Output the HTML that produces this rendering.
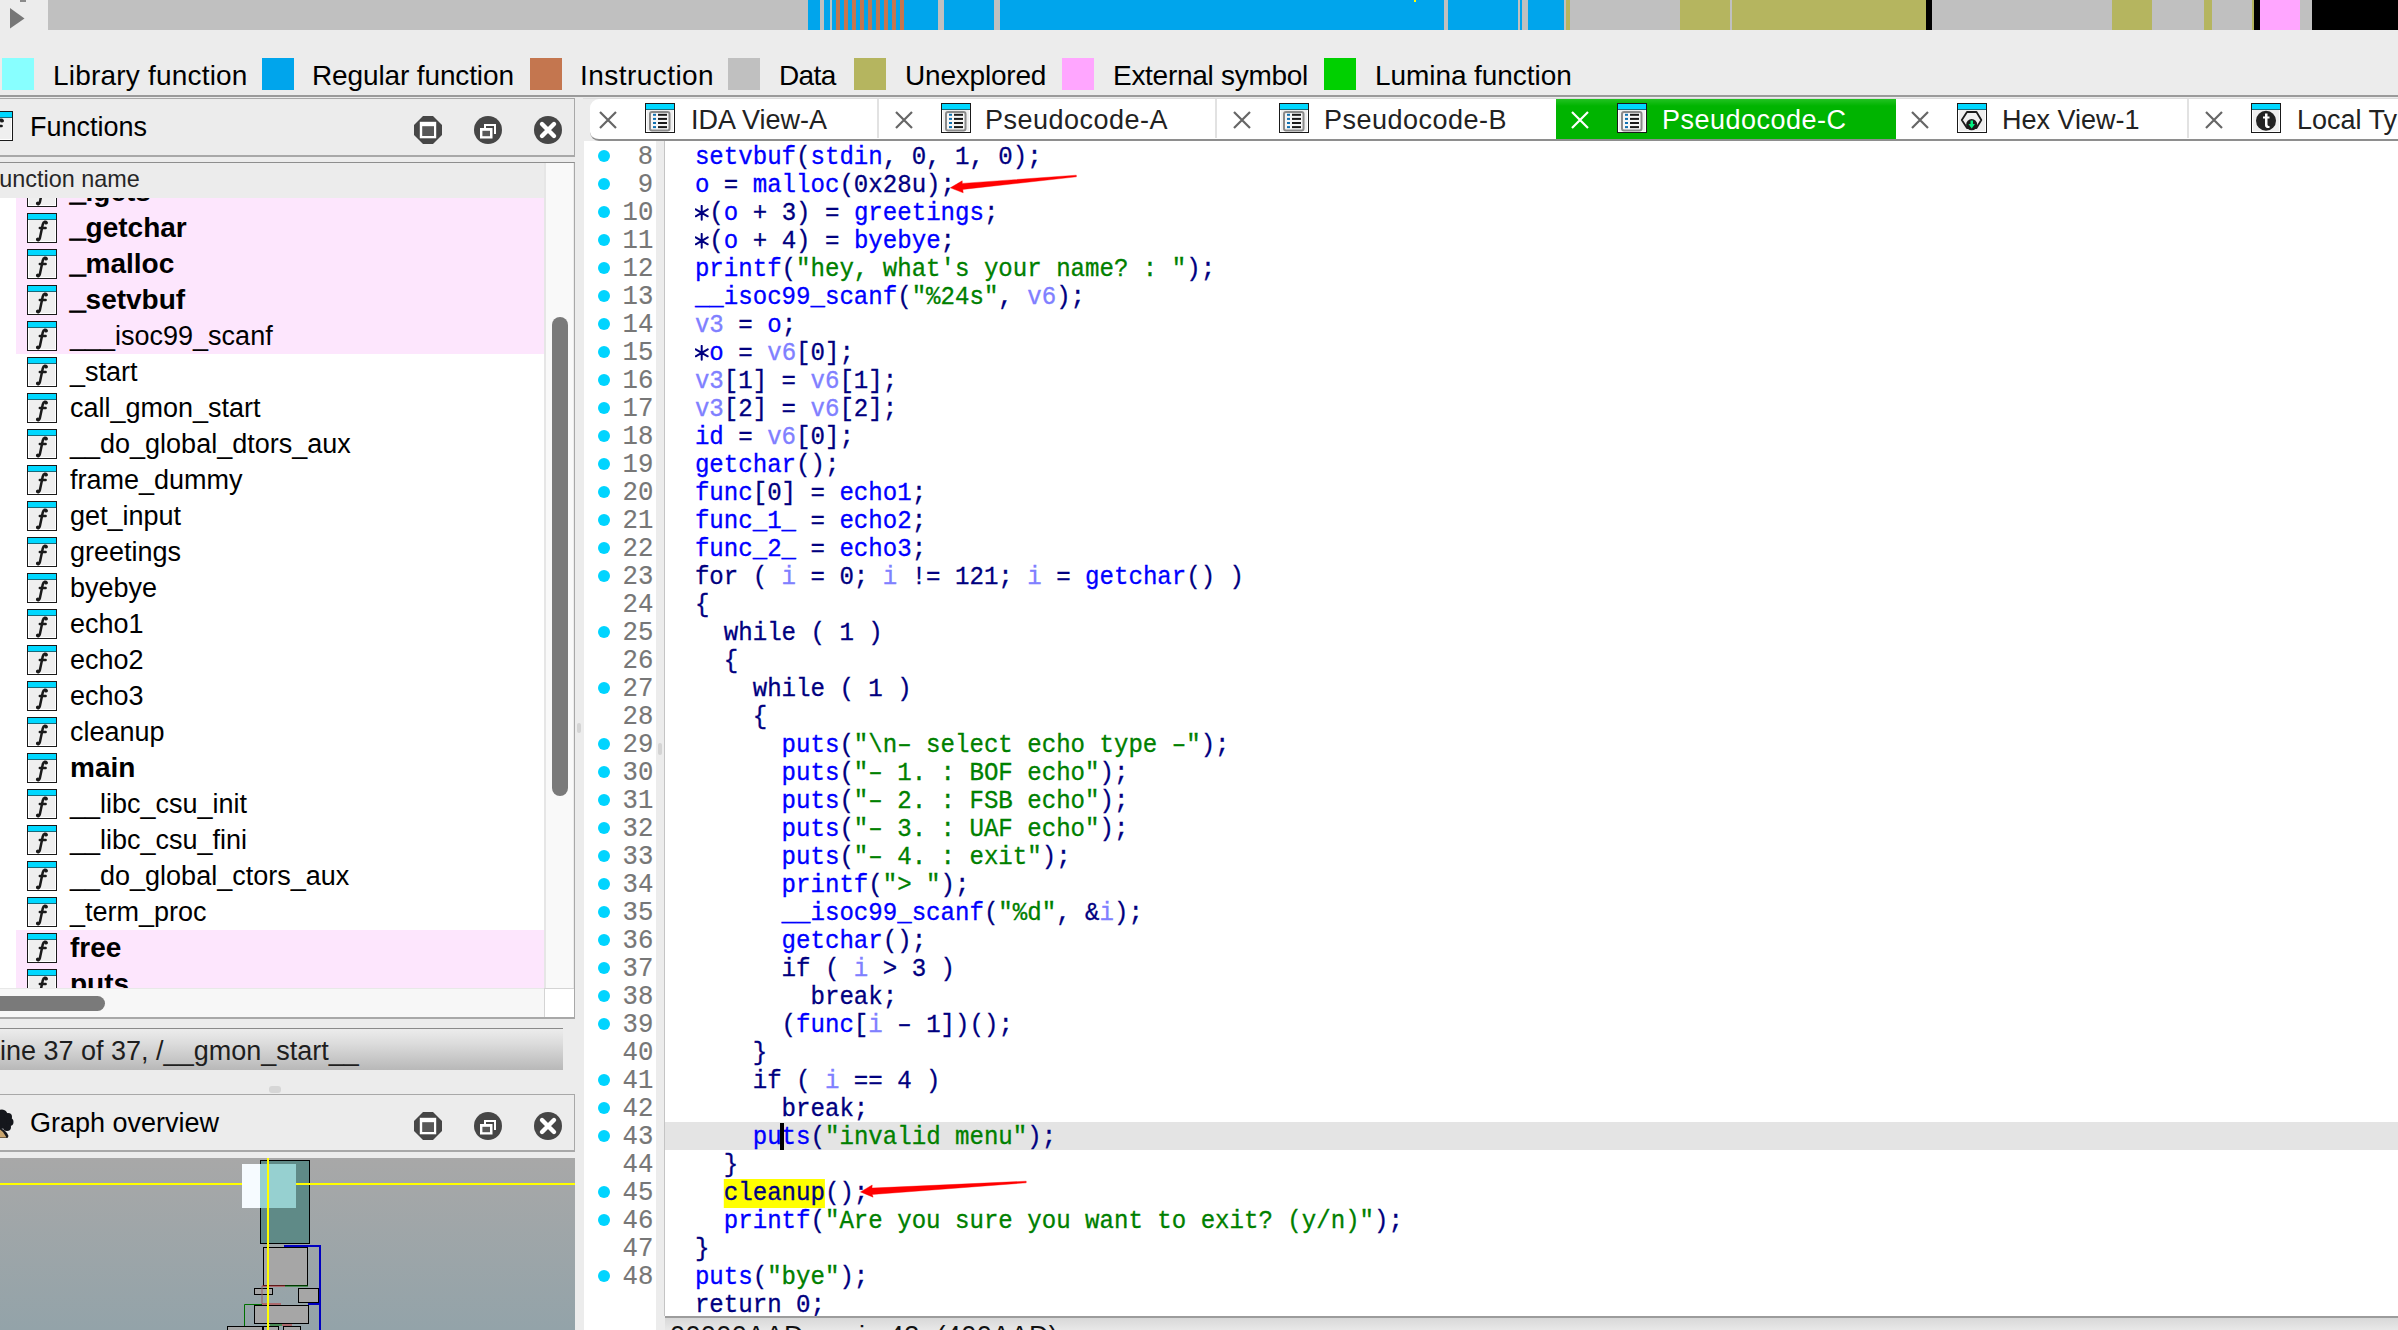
<!DOCTYPE html>
<html><head><meta charset="utf-8">
<style>
*{box-sizing:border-box;margin:0;padding:0}
html,body{width:2398px;height:1330px;overflow:hidden;background:#ececec;font-family:"Liberation Sans",sans-serif;color:#000}
.a{position:absolute}
#nav div{position:absolute;top:0;height:30px}
.g{background:#c0c0c0}.b{background:#00a5ec}.o{background:#c4764f}.y{background:#b5b55f}.k{background:#000}.pk{background:#ffa6ff}
.sw{position:absolute;top:58px;width:32px;height:32px}
.lg{position:absolute;top:59px;font-size:28px;line-height:34px;white-space:nowrap}

.r{position:absolute;left:0;width:544px;height:36px;white-space:nowrap}
.r.p{background:#fde6fd;left:16px;width:528px}
.r .fi{position:absolute;left:27px;top:3px;width:30px;height:30px}
.r.p .fi{left:11px}
.r span{position:absolute;left:70px;top:1px;font-size:27px;line-height:34px}
.r.p span{left:54px}
.r.bd span{font-weight:bold;font-size:28px}
.us{font-style:normal;-webkit-text-stroke:1.3px currentColor}

.sep{top:99px;width:2px;height:39px;background:#e2e2e2}
.xb{top:111px;width:18px;height:18px;stroke:#666}
.ti{top:103px;width:30px;height:30px}
.tt{top:103px;font-size:27px;line-height:34px;color:#222;white-space:nowrap}
.gl{position:absolute;left:583px;width:73px;height:28px}
.gl span{position:absolute;right:3px;top:1px;font-family:"Liberation Mono",monospace;font-size:27px;line-height:28px;color:#777;-webkit-text-stroke:0.15px currentColor;transform:scaleX(0.95);transform-origin:100% 0}
.dot{position:absolute;left:15px;top:8px;width:12px;height:12px;border-radius:50%;background:#00d4ff}
.cl{position:absolute;left:0;height:28px;width:1732px}
.cl pre{font-family:"Liberation Mono",monospace;font-size:25px;line-height:28px;position:absolute;left:0;top:1.5px;-webkit-text-stroke:0.32px currentColor;transform:scaleX(0.9631);transform-origin:0 0}
.n{color:#000080}.f{color:#0000ff}.s{color:#008000}.v{color:#8080ff}
.hl{color:#000080;background:#ffff00}
.ast{color:transparent;-webkit-text-stroke-color:transparent}
.cur{display:inline-block;width:0;height:28px;position:relative}
.cur:after{content:"";position:absolute;left:-1px;top:-22px;width:4px;height:27px;background:#000}
</style></head><body>
<!-- nav band -->
<div id="nav">
<svg class="a" style="left:0;top:0" width="48" height="30"><polygon points="10,8 24.5,18.5 10,28.5" fill="#777"/><rect x="20" y="0" width="6" height="2" fill="#8a8a8a"/></svg>
<div class="g" style="left:48px;width:760px"></div>
<div class="b" style="left:808px;width:12px"></div>
<div class="g" style="left:820px;width:4px"></div>
<div class="b" style="left:824px;width:6px"></div>
<div class="g" style="left:830px;width:2px"></div>
<div class="b" style="left:832px;width:72px"></div>
<div class="o" style="left:836px;width:4px"></div>
<div class="o" style="left:844px;width:4px"></div>
<div class="o" style="left:852px;width:4px"></div>
<div class="o" style="left:860px;width:4px"></div>
<div class="o" style="left:868px;width:4px"></div>
<div class="o" style="left:876px;width:4px"></div>
<div class="o" style="left:884px;width:4px"></div>
<div class="o" style="left:892px;width:4px"></div>
<div class="o" style="left:900px;width:4px"></div>
<div class="b" style="left:904px;width:34px"></div>
<div class="g" style="left:938px;width:6px"></div>
<div class="b" style="left:944px;width:50px"></div>
<div class="g" style="left:994px;width:6px"></div>
<div class="b" style="left:1000px;width:444px"></div>
<div style="left:1414px;width:2px;height:2px;background:#ff0"></div>
<div class="g" style="left:1444px;width:4px"></div>
<div class="b" style="left:1448px;width:70px"></div>
<div class="g" style="left:1518px;width:2px"></div>
<div class="b" style="left:1520px;width:2px"></div>
<div class="g" style="left:1522px;width:6px"></div>
<div class="b" style="left:1528px;width:36px"></div>
<div class="g" style="left:1564px;width:2px"></div>
<div class="y" style="left:1566px;width:4px"></div>
<div class="g" style="left:1570px;width:110px"></div>
<div class="y" style="left:1680px;width:50px"></div>
<div class="g" style="left:1730px;width:2px"></div>
<div class="y" style="left:1732px;width:194px"></div>
<div class="k" style="left:1926px;width:6px"></div>
<div class="g" style="left:1932px;width:180px"></div>
<div class="y" style="left:2112px;width:40px"></div>
<div class="g" style="left:2152px;width:52px"></div>
<div class="y" style="left:2204px;width:8px"></div>
<div class="g" style="left:2212px;width:40px"></div>
<div class="y" style="left:2252px;width:2px"></div>
<div class="k" style="left:2254px;width:6px"></div>
<div class="pk" style="left:2260px;width:40px"></div>
<div class="g" style="left:2300px;width:12px"></div>
<div class="k" style="left:2312px;width:86px"></div>
</div>
<!-- legend -->
<div class="sw" style="left:2px;background:#88ffff"></div><div class="lg" style="left:53px;letter-spacing:0.2px">Library function</div>
<div class="sw" style="left:262px;background:#00a5ec"></div><div class="lg" style="left:312px;letter-spacing:-0.13px">Regular function</div>
<div class="sw" style="left:530px;background:#c4764f"></div><div class="lg" style="left:580px;letter-spacing:0.45px">Instruction</div>
<div class="sw" style="left:728px;background:#c0c0c0"></div><div class="lg" style="left:779px;letter-spacing:-0.6px">Data</div>
<div class="sw" style="left:854px;background:#b5b55f"></div><div class="lg" style="left:905px;letter-spacing:-0.2px">Unexplored</div>
<div class="sw" style="left:1062px;background:#ffa6ff"></div><div class="lg" style="left:1113px;letter-spacing:-0.28px">External symbol</div>
<div class="sw" style="left:1324px;background:#00d000"></div><div class="lg" style="left:1375px;letter-spacing:-0.07px">Lumina function</div>
<div class="a" style="left:0;top:95px;width:2398px;height:2px;background:#9a9a9a"></div>

<!-- LEFT PANEL -->
<div class="a" style="left:0;top:98px;width:575px;height:59px;border:1px solid #a8a8a8;border-left:none;border-width:1px 1px 2px 0;background:#ececec"></div>
<svg class="a" style="left:-17px;top:111px" width="30" height="30">
<rect x="0.5" y="0.5" width="29" height="29" fill="#efefef" stroke="#1a1a1a"/>
<rect x="1.5" y="1.5" width="27" height="27" fill="none" stroke="#fff"/>
<rect x="1" y="1" width="28" height="5" fill="#00d8ff"/>
<rect x="1" y="6" width="28" height="1" fill="#1a6a7a"/>
<path d="M19.6 9.8 C19.2 8 16.4 8.2 15.8 11.2 L12.9 25 C12.5 27.2 10.8 27.8 10.2 26.4" fill="none" stroke="#1a1a1a" stroke-width="2.5" stroke-linecap="round"/>
<circle cx="18.9" cy="9.9" r="1.7" fill="#1a1a1a"/><circle cx="10.9" cy="26.3" r="1.7" fill="#1a1a1a"/>
<path d="M12.8 14.9 H18.6" stroke="#1a1a1a" stroke-width="2.5" stroke-linecap="round"/>
</svg>
<div class="a" style="left:30px;top:110px;font-size:27px;line-height:34px">Functions</div>
<svg class="a" style="left:414px;top:116px" width="28" height="28"><path d="M9 0 H19 L28 9 V19 L19 28 H9 L0 19 V9 Z" fill="#464646"/><rect x="5.8" y="5.8" width="16.4" height="16.5" fill="#fff"/><rect x="8.2" y="10.2" width="11.8" height="9.8" fill="#585858"/></svg>
<svg class="a" style="left:474px;top:116px" width="28" height="28"><circle cx="14" cy="14" r="14" fill="#464646"/><path d="M10 8 H22 V18 H20 V10 H12 V12 H10 Z" fill="#fff"/><rect x="6" y="12" width="12.5" height="10.5" fill="#fff"/><rect x="8.4" y="14.8" width="7.6" height="5.4" fill="#585858"/></svg>
<svg class="a" style="left:534px;top:116px" width="28" height="28"><circle cx="14" cy="14" r="14" fill="#464646"/><path d="M8 8 L20 20 M20 8 L8 20" stroke="#fff" stroke-width="4.4" stroke-linecap="round"/></svg>
<!-- list frame -->
<div class="a" style="left:0;top:162px;width:575px;height:857px;border:1px solid #a8a8a8;border-top-color:#8e8e8e;border-bottom-width:2px;border-left:none;background:#fff"></div>
<div class="a" style="left:0;top:163px;width:544px;height:35px;background:#ececec"></div>
<div class="a" style="left:0;top:162px;font-size:23.4px;line-height:34px;color:#262626;white-space:nowrap"><span style="margin-left:-15px">Function name</span></div>
<div id="list" class="a" style="left:0;top:198px;width:544px;height:790px;overflow:hidden;background:#fff">
<div class="r p bd" style="top:-24px"><svg class="fi">
<rect x="0.5" y="0.5" width="29" height="29" fill="#efefef" stroke="#1a1a1a"/>
<rect x="1.5" y="1.5" width="27" height="27" fill="none" stroke="#fff"/>
<rect x="1" y="1" width="28" height="5" fill="#00d8ff"/>
<rect x="1" y="6" width="28" height="1" fill="#1a6a7a"/>
<path d="M19.6 9.8 C19.2 8 16.4 8.2 15.8 11.2 L12.9 25 C12.5 27.2 10.8 27.8 10.2 26.4" fill="none" stroke="#1a1a1a" stroke-width="2.5" stroke-linecap="round"/>
<circle cx="18.9" cy="9.9" r="1.7" fill="#1a1a1a"/><circle cx="10.9" cy="26.3" r="1.7" fill="#1a1a1a"/>
<path d="M12.8 14.9 H18.6" stroke="#1a1a1a" stroke-width="2.5" stroke-linecap="round"/>
</svg><span><i class="us">_</i>.gets</span></div>
<div class="r p bd" style="top:12px"><svg class="fi">
<rect x="0.5" y="0.5" width="29" height="29" fill="#efefef" stroke="#1a1a1a"/>
<rect x="1.5" y="1.5" width="27" height="27" fill="none" stroke="#fff"/>
<rect x="1" y="1" width="28" height="5" fill="#00d8ff"/>
<rect x="1" y="6" width="28" height="1" fill="#1a6a7a"/>
<path d="M19.6 9.8 C19.2 8 16.4 8.2 15.8 11.2 L12.9 25 C12.5 27.2 10.8 27.8 10.2 26.4" fill="none" stroke="#1a1a1a" stroke-width="2.5" stroke-linecap="round"/>
<circle cx="18.9" cy="9.9" r="1.7" fill="#1a1a1a"/><circle cx="10.9" cy="26.3" r="1.7" fill="#1a1a1a"/>
<path d="M12.8 14.9 H18.6" stroke="#1a1a1a" stroke-width="2.5" stroke-linecap="round"/>
</svg><span><i class="us">_</i>getchar</span></div>
<div class="r p bd" style="top:48px"><svg class="fi">
<rect x="0.5" y="0.5" width="29" height="29" fill="#efefef" stroke="#1a1a1a"/>
<rect x="1.5" y="1.5" width="27" height="27" fill="none" stroke="#fff"/>
<rect x="1" y="1" width="28" height="5" fill="#00d8ff"/>
<rect x="1" y="6" width="28" height="1" fill="#1a6a7a"/>
<path d="M19.6 9.8 C19.2 8 16.4 8.2 15.8 11.2 L12.9 25 C12.5 27.2 10.8 27.8 10.2 26.4" fill="none" stroke="#1a1a1a" stroke-width="2.5" stroke-linecap="round"/>
<circle cx="18.9" cy="9.9" r="1.7" fill="#1a1a1a"/><circle cx="10.9" cy="26.3" r="1.7" fill="#1a1a1a"/>
<path d="M12.8 14.9 H18.6" stroke="#1a1a1a" stroke-width="2.5" stroke-linecap="round"/>
</svg><span><i class="us">_</i>malloc</span></div>
<div class="r p bd" style="top:84px"><svg class="fi">
<rect x="0.5" y="0.5" width="29" height="29" fill="#efefef" stroke="#1a1a1a"/>
<rect x="1.5" y="1.5" width="27" height="27" fill="none" stroke="#fff"/>
<rect x="1" y="1" width="28" height="5" fill="#00d8ff"/>
<rect x="1" y="6" width="28" height="1" fill="#1a6a7a"/>
<path d="M19.6 9.8 C19.2 8 16.4 8.2 15.8 11.2 L12.9 25 C12.5 27.2 10.8 27.8 10.2 26.4" fill="none" stroke="#1a1a1a" stroke-width="2.5" stroke-linecap="round"/>
<circle cx="18.9" cy="9.9" r="1.7" fill="#1a1a1a"/><circle cx="10.9" cy="26.3" r="1.7" fill="#1a1a1a"/>
<path d="M12.8 14.9 H18.6" stroke="#1a1a1a" stroke-width="2.5" stroke-linecap="round"/>
</svg><span><i class="us">_</i>setvbuf</span></div>
<div class="r p" style="top:120px"><svg class="fi">
<rect x="0.5" y="0.5" width="29" height="29" fill="#efefef" stroke="#1a1a1a"/>
<rect x="1.5" y="1.5" width="27" height="27" fill="none" stroke="#fff"/>
<rect x="1" y="1" width="28" height="5" fill="#00d8ff"/>
<rect x="1" y="6" width="28" height="1" fill="#1a6a7a"/>
<path d="M19.6 9.8 C19.2 8 16.4 8.2 15.8 11.2 L12.9 25 C12.5 27.2 10.8 27.8 10.2 26.4" fill="none" stroke="#1a1a1a" stroke-width="2.5" stroke-linecap="round"/>
<circle cx="18.9" cy="9.9" r="1.7" fill="#1a1a1a"/><circle cx="10.9" cy="26.3" r="1.7" fill="#1a1a1a"/>
<path d="M12.8 14.9 H18.6" stroke="#1a1a1a" stroke-width="2.5" stroke-linecap="round"/>
</svg><span>___isoc99_scanf</span></div>
<div class="r" style="top:156px"><svg class="fi">
<rect x="0.5" y="0.5" width="29" height="29" fill="#efefef" stroke="#1a1a1a"/>
<rect x="1.5" y="1.5" width="27" height="27" fill="none" stroke="#fff"/>
<rect x="1" y="1" width="28" height="5" fill="#00d8ff"/>
<rect x="1" y="6" width="28" height="1" fill="#1a6a7a"/>
<path d="M19.6 9.8 C19.2 8 16.4 8.2 15.8 11.2 L12.9 25 C12.5 27.2 10.8 27.8 10.2 26.4" fill="none" stroke="#1a1a1a" stroke-width="2.5" stroke-linecap="round"/>
<circle cx="18.9" cy="9.9" r="1.7" fill="#1a1a1a"/><circle cx="10.9" cy="26.3" r="1.7" fill="#1a1a1a"/>
<path d="M12.8 14.9 H18.6" stroke="#1a1a1a" stroke-width="2.5" stroke-linecap="round"/>
</svg><span>_start</span></div>
<div class="r" style="top:192px"><svg class="fi">
<rect x="0.5" y="0.5" width="29" height="29" fill="#efefef" stroke="#1a1a1a"/>
<rect x="1.5" y="1.5" width="27" height="27" fill="none" stroke="#fff"/>
<rect x="1" y="1" width="28" height="5" fill="#00d8ff"/>
<rect x="1" y="6" width="28" height="1" fill="#1a6a7a"/>
<path d="M19.6 9.8 C19.2 8 16.4 8.2 15.8 11.2 L12.9 25 C12.5 27.2 10.8 27.8 10.2 26.4" fill="none" stroke="#1a1a1a" stroke-width="2.5" stroke-linecap="round"/>
<circle cx="18.9" cy="9.9" r="1.7" fill="#1a1a1a"/><circle cx="10.9" cy="26.3" r="1.7" fill="#1a1a1a"/>
<path d="M12.8 14.9 H18.6" stroke="#1a1a1a" stroke-width="2.5" stroke-linecap="round"/>
</svg><span>call_gmon_start</span></div>
<div class="r" style="top:228px"><svg class="fi">
<rect x="0.5" y="0.5" width="29" height="29" fill="#efefef" stroke="#1a1a1a"/>
<rect x="1.5" y="1.5" width="27" height="27" fill="none" stroke="#fff"/>
<rect x="1" y="1" width="28" height="5" fill="#00d8ff"/>
<rect x="1" y="6" width="28" height="1" fill="#1a6a7a"/>
<path d="M19.6 9.8 C19.2 8 16.4 8.2 15.8 11.2 L12.9 25 C12.5 27.2 10.8 27.8 10.2 26.4" fill="none" stroke="#1a1a1a" stroke-width="2.5" stroke-linecap="round"/>
<circle cx="18.9" cy="9.9" r="1.7" fill="#1a1a1a"/><circle cx="10.9" cy="26.3" r="1.7" fill="#1a1a1a"/>
<path d="M12.8 14.9 H18.6" stroke="#1a1a1a" stroke-width="2.5" stroke-linecap="round"/>
</svg><span>__do_global_dtors_aux</span></div>
<div class="r" style="top:264px"><svg class="fi">
<rect x="0.5" y="0.5" width="29" height="29" fill="#efefef" stroke="#1a1a1a"/>
<rect x="1.5" y="1.5" width="27" height="27" fill="none" stroke="#fff"/>
<rect x="1" y="1" width="28" height="5" fill="#00d8ff"/>
<rect x="1" y="6" width="28" height="1" fill="#1a6a7a"/>
<path d="M19.6 9.8 C19.2 8 16.4 8.2 15.8 11.2 L12.9 25 C12.5 27.2 10.8 27.8 10.2 26.4" fill="none" stroke="#1a1a1a" stroke-width="2.5" stroke-linecap="round"/>
<circle cx="18.9" cy="9.9" r="1.7" fill="#1a1a1a"/><circle cx="10.9" cy="26.3" r="1.7" fill="#1a1a1a"/>
<path d="M12.8 14.9 H18.6" stroke="#1a1a1a" stroke-width="2.5" stroke-linecap="round"/>
</svg><span>frame_dummy</span></div>
<div class="r" style="top:300px"><svg class="fi">
<rect x="0.5" y="0.5" width="29" height="29" fill="#efefef" stroke="#1a1a1a"/>
<rect x="1.5" y="1.5" width="27" height="27" fill="none" stroke="#fff"/>
<rect x="1" y="1" width="28" height="5" fill="#00d8ff"/>
<rect x="1" y="6" width="28" height="1" fill="#1a6a7a"/>
<path d="M19.6 9.8 C19.2 8 16.4 8.2 15.8 11.2 L12.9 25 C12.5 27.2 10.8 27.8 10.2 26.4" fill="none" stroke="#1a1a1a" stroke-width="2.5" stroke-linecap="round"/>
<circle cx="18.9" cy="9.9" r="1.7" fill="#1a1a1a"/><circle cx="10.9" cy="26.3" r="1.7" fill="#1a1a1a"/>
<path d="M12.8 14.9 H18.6" stroke="#1a1a1a" stroke-width="2.5" stroke-linecap="round"/>
</svg><span>get_input</span></div>
<div class="r" style="top:336px"><svg class="fi">
<rect x="0.5" y="0.5" width="29" height="29" fill="#efefef" stroke="#1a1a1a"/>
<rect x="1.5" y="1.5" width="27" height="27" fill="none" stroke="#fff"/>
<rect x="1" y="1" width="28" height="5" fill="#00d8ff"/>
<rect x="1" y="6" width="28" height="1" fill="#1a6a7a"/>
<path d="M19.6 9.8 C19.2 8 16.4 8.2 15.8 11.2 L12.9 25 C12.5 27.2 10.8 27.8 10.2 26.4" fill="none" stroke="#1a1a1a" stroke-width="2.5" stroke-linecap="round"/>
<circle cx="18.9" cy="9.9" r="1.7" fill="#1a1a1a"/><circle cx="10.9" cy="26.3" r="1.7" fill="#1a1a1a"/>
<path d="M12.8 14.9 H18.6" stroke="#1a1a1a" stroke-width="2.5" stroke-linecap="round"/>
</svg><span>greetings</span></div>
<div class="r" style="top:372px"><svg class="fi">
<rect x="0.5" y="0.5" width="29" height="29" fill="#efefef" stroke="#1a1a1a"/>
<rect x="1.5" y="1.5" width="27" height="27" fill="none" stroke="#fff"/>
<rect x="1" y="1" width="28" height="5" fill="#00d8ff"/>
<rect x="1" y="6" width="28" height="1" fill="#1a6a7a"/>
<path d="M19.6 9.8 C19.2 8 16.4 8.2 15.8 11.2 L12.9 25 C12.5 27.2 10.8 27.8 10.2 26.4" fill="none" stroke="#1a1a1a" stroke-width="2.5" stroke-linecap="round"/>
<circle cx="18.9" cy="9.9" r="1.7" fill="#1a1a1a"/><circle cx="10.9" cy="26.3" r="1.7" fill="#1a1a1a"/>
<path d="M12.8 14.9 H18.6" stroke="#1a1a1a" stroke-width="2.5" stroke-linecap="round"/>
</svg><span>byebye</span></div>
<div class="r" style="top:408px"><svg class="fi">
<rect x="0.5" y="0.5" width="29" height="29" fill="#efefef" stroke="#1a1a1a"/>
<rect x="1.5" y="1.5" width="27" height="27" fill="none" stroke="#fff"/>
<rect x="1" y="1" width="28" height="5" fill="#00d8ff"/>
<rect x="1" y="6" width="28" height="1" fill="#1a6a7a"/>
<path d="M19.6 9.8 C19.2 8 16.4 8.2 15.8 11.2 L12.9 25 C12.5 27.2 10.8 27.8 10.2 26.4" fill="none" stroke="#1a1a1a" stroke-width="2.5" stroke-linecap="round"/>
<circle cx="18.9" cy="9.9" r="1.7" fill="#1a1a1a"/><circle cx="10.9" cy="26.3" r="1.7" fill="#1a1a1a"/>
<path d="M12.8 14.9 H18.6" stroke="#1a1a1a" stroke-width="2.5" stroke-linecap="round"/>
</svg><span>echo1</span></div>
<div class="r" style="top:444px"><svg class="fi">
<rect x="0.5" y="0.5" width="29" height="29" fill="#efefef" stroke="#1a1a1a"/>
<rect x="1.5" y="1.5" width="27" height="27" fill="none" stroke="#fff"/>
<rect x="1" y="1" width="28" height="5" fill="#00d8ff"/>
<rect x="1" y="6" width="28" height="1" fill="#1a6a7a"/>
<path d="M19.6 9.8 C19.2 8 16.4 8.2 15.8 11.2 L12.9 25 C12.5 27.2 10.8 27.8 10.2 26.4" fill="none" stroke="#1a1a1a" stroke-width="2.5" stroke-linecap="round"/>
<circle cx="18.9" cy="9.9" r="1.7" fill="#1a1a1a"/><circle cx="10.9" cy="26.3" r="1.7" fill="#1a1a1a"/>
<path d="M12.8 14.9 H18.6" stroke="#1a1a1a" stroke-width="2.5" stroke-linecap="round"/>
</svg><span>echo2</span></div>
<div class="r" style="top:480px"><svg class="fi">
<rect x="0.5" y="0.5" width="29" height="29" fill="#efefef" stroke="#1a1a1a"/>
<rect x="1.5" y="1.5" width="27" height="27" fill="none" stroke="#fff"/>
<rect x="1" y="1" width="28" height="5" fill="#00d8ff"/>
<rect x="1" y="6" width="28" height="1" fill="#1a6a7a"/>
<path d="M19.6 9.8 C19.2 8 16.4 8.2 15.8 11.2 L12.9 25 C12.5 27.2 10.8 27.8 10.2 26.4" fill="none" stroke="#1a1a1a" stroke-width="2.5" stroke-linecap="round"/>
<circle cx="18.9" cy="9.9" r="1.7" fill="#1a1a1a"/><circle cx="10.9" cy="26.3" r="1.7" fill="#1a1a1a"/>
<path d="M12.8 14.9 H18.6" stroke="#1a1a1a" stroke-width="2.5" stroke-linecap="round"/>
</svg><span>echo3</span></div>
<div class="r" style="top:516px"><svg class="fi">
<rect x="0.5" y="0.5" width="29" height="29" fill="#efefef" stroke="#1a1a1a"/>
<rect x="1.5" y="1.5" width="27" height="27" fill="none" stroke="#fff"/>
<rect x="1" y="1" width="28" height="5" fill="#00d8ff"/>
<rect x="1" y="6" width="28" height="1" fill="#1a6a7a"/>
<path d="M19.6 9.8 C19.2 8 16.4 8.2 15.8 11.2 L12.9 25 C12.5 27.2 10.8 27.8 10.2 26.4" fill="none" stroke="#1a1a1a" stroke-width="2.5" stroke-linecap="round"/>
<circle cx="18.9" cy="9.9" r="1.7" fill="#1a1a1a"/><circle cx="10.9" cy="26.3" r="1.7" fill="#1a1a1a"/>
<path d="M12.8 14.9 H18.6" stroke="#1a1a1a" stroke-width="2.5" stroke-linecap="round"/>
</svg><span>cleanup</span></div>
<div class="r bd" style="top:552px"><svg class="fi">
<rect x="0.5" y="0.5" width="29" height="29" fill="#efefef" stroke="#1a1a1a"/>
<rect x="1.5" y="1.5" width="27" height="27" fill="none" stroke="#fff"/>
<rect x="1" y="1" width="28" height="5" fill="#00d8ff"/>
<rect x="1" y="6" width="28" height="1" fill="#1a6a7a"/>
<path d="M19.6 9.8 C19.2 8 16.4 8.2 15.8 11.2 L12.9 25 C12.5 27.2 10.8 27.8 10.2 26.4" fill="none" stroke="#1a1a1a" stroke-width="2.5" stroke-linecap="round"/>
<circle cx="18.9" cy="9.9" r="1.7" fill="#1a1a1a"/><circle cx="10.9" cy="26.3" r="1.7" fill="#1a1a1a"/>
<path d="M12.8 14.9 H18.6" stroke="#1a1a1a" stroke-width="2.5" stroke-linecap="round"/>
</svg><span>main</span></div>
<div class="r" style="top:588px"><svg class="fi">
<rect x="0.5" y="0.5" width="29" height="29" fill="#efefef" stroke="#1a1a1a"/>
<rect x="1.5" y="1.5" width="27" height="27" fill="none" stroke="#fff"/>
<rect x="1" y="1" width="28" height="5" fill="#00d8ff"/>
<rect x="1" y="6" width="28" height="1" fill="#1a6a7a"/>
<path d="M19.6 9.8 C19.2 8 16.4 8.2 15.8 11.2 L12.9 25 C12.5 27.2 10.8 27.8 10.2 26.4" fill="none" stroke="#1a1a1a" stroke-width="2.5" stroke-linecap="round"/>
<circle cx="18.9" cy="9.9" r="1.7" fill="#1a1a1a"/><circle cx="10.9" cy="26.3" r="1.7" fill="#1a1a1a"/>
<path d="M12.8 14.9 H18.6" stroke="#1a1a1a" stroke-width="2.5" stroke-linecap="round"/>
</svg><span>__libc_csu_init</span></div>
<div class="r" style="top:624px"><svg class="fi">
<rect x="0.5" y="0.5" width="29" height="29" fill="#efefef" stroke="#1a1a1a"/>
<rect x="1.5" y="1.5" width="27" height="27" fill="none" stroke="#fff"/>
<rect x="1" y="1" width="28" height="5" fill="#00d8ff"/>
<rect x="1" y="6" width="28" height="1" fill="#1a6a7a"/>
<path d="M19.6 9.8 C19.2 8 16.4 8.2 15.8 11.2 L12.9 25 C12.5 27.2 10.8 27.8 10.2 26.4" fill="none" stroke="#1a1a1a" stroke-width="2.5" stroke-linecap="round"/>
<circle cx="18.9" cy="9.9" r="1.7" fill="#1a1a1a"/><circle cx="10.9" cy="26.3" r="1.7" fill="#1a1a1a"/>
<path d="M12.8 14.9 H18.6" stroke="#1a1a1a" stroke-width="2.5" stroke-linecap="round"/>
</svg><span>__libc_csu_fini</span></div>
<div class="r" style="top:660px"><svg class="fi">
<rect x="0.5" y="0.5" width="29" height="29" fill="#efefef" stroke="#1a1a1a"/>
<rect x="1.5" y="1.5" width="27" height="27" fill="none" stroke="#fff"/>
<rect x="1" y="1" width="28" height="5" fill="#00d8ff"/>
<rect x="1" y="6" width="28" height="1" fill="#1a6a7a"/>
<path d="M19.6 9.8 C19.2 8 16.4 8.2 15.8 11.2 L12.9 25 C12.5 27.2 10.8 27.8 10.2 26.4" fill="none" stroke="#1a1a1a" stroke-width="2.5" stroke-linecap="round"/>
<circle cx="18.9" cy="9.9" r="1.7" fill="#1a1a1a"/><circle cx="10.9" cy="26.3" r="1.7" fill="#1a1a1a"/>
<path d="M12.8 14.9 H18.6" stroke="#1a1a1a" stroke-width="2.5" stroke-linecap="round"/>
</svg><span>__do_global_ctors_aux</span></div>
<div class="r" style="top:696px"><svg class="fi">
<rect x="0.5" y="0.5" width="29" height="29" fill="#efefef" stroke="#1a1a1a"/>
<rect x="1.5" y="1.5" width="27" height="27" fill="none" stroke="#fff"/>
<rect x="1" y="1" width="28" height="5" fill="#00d8ff"/>
<rect x="1" y="6" width="28" height="1" fill="#1a6a7a"/>
<path d="M19.6 9.8 C19.2 8 16.4 8.2 15.8 11.2 L12.9 25 C12.5 27.2 10.8 27.8 10.2 26.4" fill="none" stroke="#1a1a1a" stroke-width="2.5" stroke-linecap="round"/>
<circle cx="18.9" cy="9.9" r="1.7" fill="#1a1a1a"/><circle cx="10.9" cy="26.3" r="1.7" fill="#1a1a1a"/>
<path d="M12.8 14.9 H18.6" stroke="#1a1a1a" stroke-width="2.5" stroke-linecap="round"/>
</svg><span>_term_proc</span></div>
<div class="r p bd" style="top:732px"><svg class="fi">
<rect x="0.5" y="0.5" width="29" height="29" fill="#efefef" stroke="#1a1a1a"/>
<rect x="1.5" y="1.5" width="27" height="27" fill="none" stroke="#fff"/>
<rect x="1" y="1" width="28" height="5" fill="#00d8ff"/>
<rect x="1" y="6" width="28" height="1" fill="#1a6a7a"/>
<path d="M19.6 9.8 C19.2 8 16.4 8.2 15.8 11.2 L12.9 25 C12.5 27.2 10.8 27.8 10.2 26.4" fill="none" stroke="#1a1a1a" stroke-width="2.5" stroke-linecap="round"/>
<circle cx="18.9" cy="9.9" r="1.7" fill="#1a1a1a"/><circle cx="10.9" cy="26.3" r="1.7" fill="#1a1a1a"/>
<path d="M12.8 14.9 H18.6" stroke="#1a1a1a" stroke-width="2.5" stroke-linecap="round"/>
</svg><span>free</span></div>
<div class="r p bd" style="top:768px"><svg class="fi">
<rect x="0.5" y="0.5" width="29" height="29" fill="#efefef" stroke="#1a1a1a"/>
<rect x="1.5" y="1.5" width="27" height="27" fill="none" stroke="#fff"/>
<rect x="1" y="1" width="28" height="5" fill="#00d8ff"/>
<rect x="1" y="6" width="28" height="1" fill="#1a6a7a"/>
<path d="M19.6 9.8 C19.2 8 16.4 8.2 15.8 11.2 L12.9 25 C12.5 27.2 10.8 27.8 10.2 26.4" fill="none" stroke="#1a1a1a" stroke-width="2.5" stroke-linecap="round"/>
<circle cx="18.9" cy="9.9" r="1.7" fill="#1a1a1a"/><circle cx="10.9" cy="26.3" r="1.7" fill="#1a1a1a"/>
<path d="M12.8 14.9 H18.6" stroke="#1a1a1a" stroke-width="2.5" stroke-linecap="round"/>
</svg><span>puts</span></div>
</div>
<!-- vscroll -->
<div class="a" style="left:544px;top:163px;width:30px;height:825px;background:#f9f9f9;border-left:2px solid #e6e6e6;border-right:1px solid #ececec"></div>
<div class="a" style="left:552px;top:317px;width:16px;height:479px;border-radius:8px;background:#7a7a7a"></div>
<!-- hscroll -->
<div class="a" style="left:0;top:988px;width:544px;height:29px;background:#f7f7f7;border-top:1px solid #e8e8e8"></div>
<div class="a" style="left:-10px;top:996px;width:115px;height:15px;border-radius:8px;background:#7a7a7a"></div>
<div class="a" style="left:544px;top:988px;width:30px;height:29px;background:#fff;border-left:1px solid #d4d4d4;border-top:1px solid #d4d4d4"></div>
<!-- status box -->
<div class="a" style="left:0;top:1028px;width:563px;height:42px;border-top:1px solid #8a8a8a;background:linear-gradient(#ececec,#dcdcdc 35%,#b8b8b8)"></div>
<div class="a" style="left:0;top:1034px;font-size:27px;line-height:34px;color:#1e1e1e;white-space:nowrap">ine 37 of 37, /__gmon_start__</div>
<div class="a" style="left:269px;top:1086px;width:12px;height:7px;border-radius:3px;background:#d6d6d6"></div>
<!-- graph overview header -->
<div class="a" style="left:0;top:1094px;width:575px;height:58px;border:1px solid #a8a8a8;border-left:none;border-width:1px 1px 2px 0;background:#ececec"></div>
<svg class="a" style="left:0;top:1108px" width="16" height="32"><circle cx="2" cy="7" r="5.5" fill="#15171c"/><circle cx="8" cy="9" r="4" fill="#15171c"/><circle cx="9.5" cy="14" r="4" fill="#15171c"/><circle cx="7" cy="19" r="4" fill="#15171c"/><circle cx="1" cy="15" r="6" fill="#15171c"/><path d="M0 20 L4 22 L7 25 L8.5 28 L7.5 30 L0 30 Z" fill="#15171c"/><path d="M0 21.5 L3 24 L6.5 29.5 L0 29.5 Z" fill="#c9a56e"/></svg>
<div class="a" style="left:30px;top:1106px;font-size:27px;line-height:34px">Graph overview</div>
<svg class="a" style="left:414px;top:1112px" width="28" height="28"><path d="M9 0 H19 L28 9 V19 L19 28 H9 L0 19 V9 Z" fill="#464646"/><rect x="5.8" y="5.8" width="16.4" height="16.5" fill="#fff"/><rect x="8.2" y="10.2" width="11.8" height="9.8" fill="#585858"/></svg>
<svg class="a" style="left:474px;top:1112px" width="28" height="28"><circle cx="14" cy="14" r="14" fill="#464646"/><path d="M10 8 H22 V18 H20 V10 H12 V12 H10 Z" fill="#fff"/><rect x="6" y="12" width="12.5" height="10.5" fill="#fff"/><rect x="8.4" y="14.8" width="7.6" height="5.4" fill="#585858"/></svg>
<svg class="a" style="left:534px;top:1112px" width="28" height="28"><circle cx="14" cy="14" r="14" fill="#464646"/><path d="M8 8 L20 20 M20 8 L8 20" stroke="#fff" stroke-width="4.4" stroke-linecap="round"/></svg>
<!-- graph -->
<div class="a" style="left:0;top:1158px;width:575px;height:172px;background:linear-gradient(#a8a8a8,#93a3a9);overflow:hidden">
<svg width="575" height="172" style="position:absolute;left:0;top:0">
<rect x="260.5" y="2.5" width="49" height="83" fill="#5f8a87" stroke="#000"/>
<rect x="242" y="6" width="18" height="44" fill="#f6fbff"/>
<rect x="260" y="6" width="36" height="44" fill="#96d0d0"/>
<rect x="0" y="25" width="242" height="2" fill="#ffff00"/>
<rect x="296" y="25" width="279" height="2" fill="#ffff00"/>
<path d="M284 88 H320 V172 M308 146 H320" fill="none" stroke="#0000c0" stroke-width="2"/>
<rect x="263.5" y="89.5" width="44" height="38" fill="#a6a6a6" stroke="#000"/>
<rect x="254.5" y="130.5" width="18" height="6" fill="#a6a6a6" stroke="#000"/>
<rect x="298.5" y="130.5" width="20" height="14" fill="#a6a6a6" stroke="#000"/>
<rect x="254.5" y="147.5" width="54" height="18" fill="#a6a6a6" stroke="#000"/>
<rect x="227.5" y="168.5" width="35" height="10" fill="#a6a6a6" stroke="#000"/>
<rect x="263.5" y="168.5" width="15" height="10" fill="#a6a6a6" stroke="#000"/>
<rect x="283.5" y="168.5" width="17" height="10" fill="#a6a6a6" stroke="#000"/>
<path d="M262 128 H285 M262 146 H281 M282 167 H292" stroke="#c03030" stroke-width="1"/>
<path d="M285 128 H308 M244.5 168 V146.5 H262 M270 167 H282" fill="none" stroke="#007000" stroke-width="1"/>
<path d="M262 128 V146" stroke="#906060" stroke-width="1"/>
<rect x="267" y="0" width="2" height="172" fill="#ffff00"/>
</svg>
</div>


<!-- RIGHT PANEL -->
<div class="a" style="left:583px;top:98px;width:1815px;height:1px;background:#dcdcdc"></div>
<div class="a" style="left:590px;top:99px;width:1808px;height:42px;background:#fff;border-radius:9px 0 0 9px;border-bottom:2px solid #8e8e8e"></div>
<div class="a sep" style="left:877px"></div>
<div class="a sep" style="left:1215px"></div>
<div class="a sep" style="left:2187px"></div>
<div class="a" style="left:1556px;top:99px;width:340px;height:40px;background:linear-gradient(#22c222,#00b400 7px,#00b400)"></div>
<svg class="a xb" style="left:599px"><path d="M1 1 L17 17 M17 1 L1 17" stroke-width="2.2"/></svg>
<svg class="a xb" style="left:895px"><path d="M1 1 L17 17 M17 1 L1 17" stroke-width="2.2"/></svg>
<svg class="a xb" style="left:1233px"><path d="M1 1 L17 17 M17 1 L1 17" stroke-width="2.2"/></svg>
<svg class="a xb" style="left:1571px;stroke:#fff"><path d="M1 1 L17 17 M17 1 L1 17" stroke-width="2.2"/></svg>
<svg class="a xb" style="left:1911px"><path d="M1 1 L17 17 M17 1 L1 17" stroke-width="2.2"/></svg>
<svg class="a xb" style="left:2205px"><path d="M1 1 L17 17 M17 1 L1 17" stroke-width="2.2"/></svg>
<svg class="a ti" style="left:645px">
<rect x="0.5" y="0.5" width="29" height="29" fill="#efefef" stroke="#1a1a1a"/>
<rect x="1.5" y="1.5" width="27" height="27" fill="none" stroke="#fff"/>
<rect x="1" y="1" width="28" height="5" fill="#00d8ff"/>
<rect x="1" y="6" width="28" height="1" fill="#1a6a7a"/>
<rect x="5" y="9" width="19.5" height="18.5" rx="2" fill="#f6f6f6" stroke="#8a8a8a" stroke-width="2"/>
<rect x="8" y="10.8" width="3" height="2" fill="#1070b0"/><rect x="13" y="10.8" width="9" height="2" fill="#1a1a1a"/>
<rect x="8" y="14.9" width="3" height="2" fill="#1070b0"/><rect x="13" y="14.9" width="9" height="2" fill="#1a1a1a"/>
<rect x="8" y="19" width="3" height="2" fill="#1070b0"/><rect x="13" y="19" width="9" height="2" fill="#1a1a1a"/>
<rect x="8" y="23.1" width="3" height="2" fill="#1070b0"/><rect x="13" y="23.1" width="9" height="2" fill="#1a1a1a"/>
</svg>
<svg class="a ti" style="left:941px">
<rect x="0.5" y="0.5" width="29" height="29" fill="#efefef" stroke="#1a1a1a"/>
<rect x="1.5" y="1.5" width="27" height="27" fill="none" stroke="#fff"/>
<rect x="1" y="1" width="28" height="5" fill="#00d8ff"/>
<rect x="1" y="6" width="28" height="1" fill="#1a6a7a"/>
<rect x="5" y="9" width="19.5" height="18.5" rx="2" fill="#f6f6f6" stroke="#8a8a8a" stroke-width="2"/>
<rect x="8" y="10.8" width="3" height="2" fill="#1070b0"/><rect x="13" y="10.8" width="9" height="2" fill="#1a1a1a"/>
<rect x="8" y="14.9" width="3" height="2" fill="#1070b0"/><rect x="13" y="14.9" width="9" height="2" fill="#1a1a1a"/>
<rect x="8" y="19" width="3" height="2" fill="#1070b0"/><rect x="13" y="19" width="9" height="2" fill="#1a1a1a"/>
<rect x="8" y="23.1" width="3" height="2" fill="#1070b0"/><rect x="13" y="23.1" width="9" height="2" fill="#1a1a1a"/>
</svg>
<svg class="a ti" style="left:1279px">
<rect x="0.5" y="0.5" width="29" height="29" fill="#efefef" stroke="#1a1a1a"/>
<rect x="1.5" y="1.5" width="27" height="27" fill="none" stroke="#fff"/>
<rect x="1" y="1" width="28" height="5" fill="#00d8ff"/>
<rect x="1" y="6" width="28" height="1" fill="#1a6a7a"/>
<rect x="5" y="9" width="19.5" height="18.5" rx="2" fill="#f6f6f6" stroke="#8a8a8a" stroke-width="2"/>
<rect x="8" y="10.8" width="3" height="2" fill="#1070b0"/><rect x="13" y="10.8" width="9" height="2" fill="#1a1a1a"/>
<rect x="8" y="14.9" width="3" height="2" fill="#1070b0"/><rect x="13" y="14.9" width="9" height="2" fill="#1a1a1a"/>
<rect x="8" y="19" width="3" height="2" fill="#1070b0"/><rect x="13" y="19" width="9" height="2" fill="#1a1a1a"/>
<rect x="8" y="23.1" width="3" height="2" fill="#1070b0"/><rect x="13" y="23.1" width="9" height="2" fill="#1a1a1a"/>
</svg>
<svg class="a ti" style="left:1617px">
<rect x="0.5" y="0.5" width="29" height="29" fill="#efefef" stroke="#1a1a1a"/>
<rect x="1.5" y="1.5" width="27" height="27" fill="none" stroke="#fff"/>
<rect x="1" y="1" width="28" height="5" fill="#00d8ff"/>
<rect x="1" y="6" width="28" height="1" fill="#1a6a7a"/>
<rect x="5" y="9" width="19.5" height="18.5" rx="2" fill="#f6f6f6" stroke="#8a8a8a" stroke-width="2"/>
<rect x="8" y="10.8" width="3" height="2" fill="#1070b0"/><rect x="13" y="10.8" width="9" height="2" fill="#1a1a1a"/>
<rect x="8" y="14.9" width="3" height="2" fill="#1070b0"/><rect x="13" y="14.9" width="9" height="2" fill="#1a1a1a"/>
<rect x="8" y="19" width="3" height="2" fill="#1070b0"/><rect x="13" y="19" width="9" height="2" fill="#1a1a1a"/>
<rect x="8" y="23.1" width="3" height="2" fill="#1070b0"/><rect x="13" y="23.1" width="9" height="2" fill="#1a1a1a"/>
</svg>
<svg class="a ti" style="left:1957px"><rect x="0.5" y="0.5" width="29" height="29" fill="#efefef" stroke="#1a1a1a"/><rect x="1.5" y="1.5" width="27" height="27" fill="none" stroke="#fff"/><rect x="1" y="1" width="28" height="5" fill="#00d8ff"/><rect x="1" y="6" width="28" height="1" fill="#1a6a7a"/>
<path d="M10 9 H19.5 L24.3 17 L19.5 25 H10 L4.8 17 Z" fill="none" stroke="#1a1a1a" stroke-width="1.8" stroke-linejoin="round"/>
<circle cx="14.7" cy="21.7" r="5.6" fill="#1a1a1a"/><path d="M13.5 17.5 H16 V21 H18 L14.7 25.5 L11.5 21 H13.5 Z" fill="#00f080"/></svg>
<svg class="a ti" style="left:2251px"><rect x="0.5" y="0.5" width="29" height="29" fill="#efefef" stroke="#1a1a1a"/><rect x="1.5" y="1.5" width="27" height="27" fill="none" stroke="#fff"/><rect x="1" y="1" width="28" height="5" fill="#00d8ff"/><rect x="1" y="6" width="28" height="1" fill="#1a6a7a"/>
<circle cx="15" cy="17.8" r="10" fill="#222"/><path d="M14 10.5 H16.5 V13.5 H18.5 V15.5 H16.5 V21.5 C16.5 22.8 17.5 23 18.5 23 V25 C15.5 25.3 14 24.5 14 22 V15.5 H12 V13.5 H14 Z" fill="#fff"/></svg>
<div class="a tt" style="left:691px">IDA View-A</div>
<div class="a tt" style="letter-spacing:0.48px;left:985px">Pseudocode-A</div>
<div class="a tt" style="letter-spacing:0.48px;left:1324px">Pseudocode-B</div>
<div class="a tt" style="letter-spacing:0.48px;left:1662px;color:#fff">Pseudocode-C</div>
<div class="a tt" style="left:2002px">Hex View-1</div>
<div class="a tt" style="left:2297px">Local Types</div>
<!-- code area -->
<div class="a" style="left:584px;top:141px;width:72px;height:1189px;background:#fff"></div>
<div class="a" style="left:656px;top:141px;width:8px;height:1189px;background:#ececec"></div>
<div class="a" style="left:664px;top:141px;width:1px;height:1175px;background:#c4c4c4"></div>
<div class="a" style="left:665px;top:141px;width:1733px;height:1175px;background:#fff;overflow:hidden">
<div class="a" style="left:0;top:981px;width:1733px;height:28px;background:#e4e4e4"></div>
</div>
<div class="a" style="left:577px;top:723px;width:4px;height:10px;border-radius:2px;background:#d4d4d4"></div>
<div class="a" style="left:658px;top:743px;width:4px;height:12px;border-radius:2px;background:#d4d4d4"></div>
<div id="gutter">
<div class="gl" style="top:142px"><b class="dot"></b><span>8</span></div>
<div class="gl" style="top:170px"><b class="dot"></b><span>9</span></div>
<div class="gl" style="top:198px"><b class="dot"></b><span>10</span></div>
<div class="gl" style="top:226px"><b class="dot"></b><span>11</span></div>
<div class="gl" style="top:254px"><b class="dot"></b><span>12</span></div>
<div class="gl" style="top:282px"><b class="dot"></b><span>13</span></div>
<div class="gl" style="top:310px"><b class="dot"></b><span>14</span></div>
<div class="gl" style="top:338px"><b class="dot"></b><span>15</span></div>
<div class="gl" style="top:366px"><b class="dot"></b><span>16</span></div>
<div class="gl" style="top:394px"><b class="dot"></b><span>17</span></div>
<div class="gl" style="top:422px"><b class="dot"></b><span>18</span></div>
<div class="gl" style="top:450px"><b class="dot"></b><span>19</span></div>
<div class="gl" style="top:478px"><b class="dot"></b><span>20</span></div>
<div class="gl" style="top:506px"><b class="dot"></b><span>21</span></div>
<div class="gl" style="top:534px"><b class="dot"></b><span>22</span></div>
<div class="gl" style="top:562px"><b class="dot"></b><span>23</span></div>
<div class="gl" style="top:590px"><span>24</span></div>
<div class="gl" style="top:618px"><b class="dot"></b><span>25</span></div>
<div class="gl" style="top:646px"><span>26</span></div>
<div class="gl" style="top:674px"><b class="dot"></b><span>27</span></div>
<div class="gl" style="top:702px"><span>28</span></div>
<div class="gl" style="top:730px"><b class="dot"></b><span>29</span></div>
<div class="gl" style="top:758px"><b class="dot"></b><span>30</span></div>
<div class="gl" style="top:786px"><b class="dot"></b><span>31</span></div>
<div class="gl" style="top:814px"><b class="dot"></b><span>32</span></div>
<div class="gl" style="top:842px"><b class="dot"></b><span>33</span></div>
<div class="gl" style="top:870px"><b class="dot"></b><span>34</span></div>
<div class="gl" style="top:898px"><b class="dot"></b><span>35</span></div>
<div class="gl" style="top:926px"><b class="dot"></b><span>36</span></div>
<div class="gl" style="top:954px"><b class="dot"></b><span>37</span></div>
<div class="gl" style="top:982px"><b class="dot"></b><span>38</span></div>
<div class="gl" style="top:1010px"><b class="dot"></b><span>39</span></div>
<div class="gl" style="top:1038px"><span>40</span></div>
<div class="gl" style="top:1066px"><b class="dot"></b><span>41</span></div>
<div class="gl" style="top:1094px"><b class="dot"></b><span>42</span></div>
<div class="gl" style="top:1122px"><b class="dot"></b><span>43</span></div>
<div class="gl" style="top:1150px"><span>44</span></div>
<div class="gl" style="top:1178px"><b class="dot"></b><span>45</span></div>
<div class="gl" style="top:1206px"><b class="dot"></b><span>46</span></div>
<div class="gl" style="top:1234px"><span>47</span></div>
<div class="gl" style="top:1262px"><b class="dot"></b><span>48</span></div>
</div>
<div id="code" class="a" style="left:666px;top:0;width:1732px;height:1316px;overflow:hidden">
<div class="cl" style="top:142px"><pre>  <span class="f">setvbuf</span><span class="n">(</span><span class="f">stdin</span><span class="n">, 0, 1, 0);</span></pre></div>
<div class="cl" style="top:170px"><pre>  <span class="f">o</span><span class="n"> = </span><span class="f">malloc</span><span class="n">(0x28u);</span></pre></div>
<div class="cl" style="top:198px"><pre>  <span class="n"><span class="ast">*</span>(</span><span class="f">o</span><span class="n"> + 3) = </span><span class="f">greetings</span><span class="n">;</span></pre></div>
<div class="cl" style="top:226px"><pre>  <span class="n"><span class="ast">*</span>(</span><span class="f">o</span><span class="n"> + 4) = </span><span class="f">byebye</span><span class="n">;</span></pre></div>
<div class="cl" style="top:254px"><pre>  <span class="f">printf</span><span class="n">(</span><span class="s">&quot;hey, what&#x27;s your name? : &quot;</span><span class="n">);</span></pre></div>
<div class="cl" style="top:282px"><pre>  <span class="f">__isoc99_scanf</span><span class="n">(</span><span class="s">&quot;%24s&quot;</span><span class="n">, </span><span class="v">v6</span><span class="n">);</span></pre></div>
<div class="cl" style="top:310px"><pre>  <span class="v">v3</span><span class="n"> = </span><span class="f">o</span><span class="n">;</span></pre></div>
<div class="cl" style="top:338px"><pre>  <span class="n"><span class="ast">*</span></span><span class="f">o</span><span class="n"> = </span><span class="v">v6</span><span class="n">[0];</span></pre></div>
<div class="cl" style="top:366px"><pre>  <span class="v">v3</span><span class="n">[1] = </span><span class="v">v6</span><span class="n">[1];</span></pre></div>
<div class="cl" style="top:394px"><pre>  <span class="v">v3</span><span class="n">[2] = </span><span class="v">v6</span><span class="n">[2];</span></pre></div>
<div class="cl" style="top:422px"><pre>  <span class="f">id</span><span class="n"> = </span><span class="v">v6</span><span class="n">[0];</span></pre></div>
<div class="cl" style="top:450px"><pre>  <span class="f">getchar</span><span class="n">();</span></pre></div>
<div class="cl" style="top:478px"><pre>  <span class="f">func</span><span class="n">[0] = </span><span class="f">echo1</span><span class="n">;</span></pre></div>
<div class="cl" style="top:506px"><pre>  <span class="f">func_1_</span><span class="n"> = </span><span class="f">echo2</span><span class="n">;</span></pre></div>
<div class="cl" style="top:534px"><pre>  <span class="f">func_2_</span><span class="n"> = </span><span class="f">echo3</span><span class="n">;</span></pre></div>
<div class="cl" style="top:562px"><pre>  <span class="n">for ( </span><span class="v">i</span><span class="n"> = 0; </span><span class="v">i</span><span class="n"> != 121; </span><span class="v">i</span><span class="n"> = </span><span class="f">getchar</span><span class="n">() )</span></pre></div>
<div class="cl" style="top:590px"><pre>  <span class="n">{</span></pre></div>
<div class="cl" style="top:618px"><pre>  <span class="n">  while ( 1 )</span></pre></div>
<div class="cl" style="top:646px"><pre>  <span class="n">  {</span></pre></div>
<div class="cl" style="top:674px"><pre>  <span class="n">    while ( 1 )</span></pre></div>
<div class="cl" style="top:702px"><pre>  <span class="n">    {</span></pre></div>
<div class="cl" style="top:730px"><pre>  <span class="n">      </span><span class="f">puts</span><span class="n">(</span><span class="s">&quot;\n– select echo type –&quot;</span><span class="n">);</span></pre></div>
<div class="cl" style="top:758px"><pre>  <span class="n">      </span><span class="f">puts</span><span class="n">(</span><span class="s">&quot;– 1. : BOF echo&quot;</span><span class="n">);</span></pre></div>
<div class="cl" style="top:786px"><pre>  <span class="n">      </span><span class="f">puts</span><span class="n">(</span><span class="s">&quot;– 2. : FSB echo&quot;</span><span class="n">);</span></pre></div>
<div class="cl" style="top:814px"><pre>  <span class="n">      </span><span class="f">puts</span><span class="n">(</span><span class="s">&quot;– 3. : UAF echo&quot;</span><span class="n">);</span></pre></div>
<div class="cl" style="top:842px"><pre>  <span class="n">      </span><span class="f">puts</span><span class="n">(</span><span class="s">&quot;– 4. : exit&quot;</span><span class="n">);</span></pre></div>
<div class="cl" style="top:870px"><pre>  <span class="n">      </span><span class="f">printf</span><span class="n">(</span><span class="s">&quot;&gt; &quot;</span><span class="n">);</span></pre></div>
<div class="cl" style="top:898px"><pre>  <span class="n">      </span><span class="f">__isoc99_scanf</span><span class="n">(</span><span class="s">&quot;%d&quot;</span><span class="n">, &amp;</span><span class="v">i</span><span class="n">);</span></pre></div>
<div class="cl" style="top:926px"><pre>  <span class="n">      </span><span class="f">getchar</span><span class="n">();</span></pre></div>
<div class="cl" style="top:954px"><pre>  <span class="n">      if ( </span><span class="v">i</span><span class="n"> &gt; 3 )</span></pre></div>
<div class="cl" style="top:982px"><pre>  <span class="n">        break;</span></pre></div>
<div class="cl" style="top:1010px"><pre>  <span class="n">      (</span><span class="f">func</span><span class="n">[</span><span class="v">i</span><span class="n"> – 1])();</span></pre></div>
<div class="cl" style="top:1038px"><pre>  <span class="n">    }</span></pre></div>
<div class="cl" style="top:1066px"><pre>  <span class="n">    if ( </span><span class="v">i</span><span class="n"> == 4 )</span></pre></div>
<div class="cl" style="top:1094px"><pre>  <span class="n">      break;</span></pre></div>
<div class="cl hlline" style="top:1122px"><pre>  <span class="n">    </span><span class="f">pu</span><span class="f">ts</span><span class="n">(</span><span class="s">&quot;invalid menu&quot;</span><span class="n">);</span></pre></div>
<div class="cl" style="top:1150px"><pre>  <span class="n">  }</span></pre></div>
<div class="cl" style="top:1178px"><pre>  <span class="n">  </span><span class="hl">cleanup</span><span class="n">();</span></pre></div>
<div class="cl" style="top:1206px"><pre>  <span class="n">  </span><span class="f">printf</span><span class="n">(</span><span class="s">&quot;Are you sure you want to exit? (y/n)&quot;</span><span class="n">);</span></pre></div>
<div class="cl" style="top:1234px"><pre>  <span class="n">}</span></pre></div>
<div class="cl" style="top:1262px"><pre>  <span class="f">puts</span><span class="n">(</span><span class="s">&quot;bye&quot;</span><span class="n">);</span></pre></div>
<div class="cl" style="top:1290px"><pre>  <span class="n">return 0;</span></pre></div>
</div>
<div class="a" style="left:780px;top:1123px;width:4px;height:27px;background:#000"></div>
<svg class="a" style="left:695px;top:205px" width="15" height="16"><path d="M6.7 0.9 V14.7 M0.7 4.3 L12.7 11.3 M12.7 4.3 L0.7 11.3" stroke="#000080" stroke-width="2" stroke-linecap="round"/></svg><svg class="a" style="left:695px;top:233px" width="15" height="16"><path d="M6.7 0.9 V14.7 M0.7 4.3 L12.7 11.3 M12.7 4.3 L0.7 11.3" stroke="#000080" stroke-width="2" stroke-linecap="round"/></svg><svg class="a" style="left:695px;top:345px" width="15" height="16"><path d="M6.7 0.9 V14.7 M0.7 4.3 L12.7 11.3 M12.7 4.3 L0.7 11.3" stroke="#000080" stroke-width="2" stroke-linecap="round"/></svg>
<!-- arrows -->
<svg class="a" style="left:940px;top:170px" width="150" height="30"><polygon points="10.3,17.8 22.2,10.8 22.3,13.4 136.3,5.2 136.4,6.8 22.8,19.4 23.2,22.8" fill="#ff0000" stroke="#ff0000" stroke-width="0.4" stroke-linejoin="round"/></svg>
<svg class="a" style="left:850px;top:1175px" width="190" height="30"><polygon points="10.5,16.9 22.2,10.0 22.0,13.1 176.2,6.2 176.2,7.8 22.3,19.5 23.1,22.2" fill="#ff0000" stroke="#ff0000" stroke-width="0.4" stroke-linejoin="round"/></svg>
<!-- status bar -->
<div class="a" style="left:665px;top:1316px;width:1733px;height:2px;background:#9c9c9c"></div>
<div class="a" style="left:665px;top:1318px;width:1733px;height:12px;background:linear-gradient(#d8d8d8,#e8e8e8);overflow:hidden">
<div class="a" style="left:5px;top:1px;font-size:27px;line-height:34px;color:#111;white-space:pre;letter-spacing:0.4px;word-spacing:9px">00000AAD main:43 (400AAD)</div>
</div>

</body></html>
